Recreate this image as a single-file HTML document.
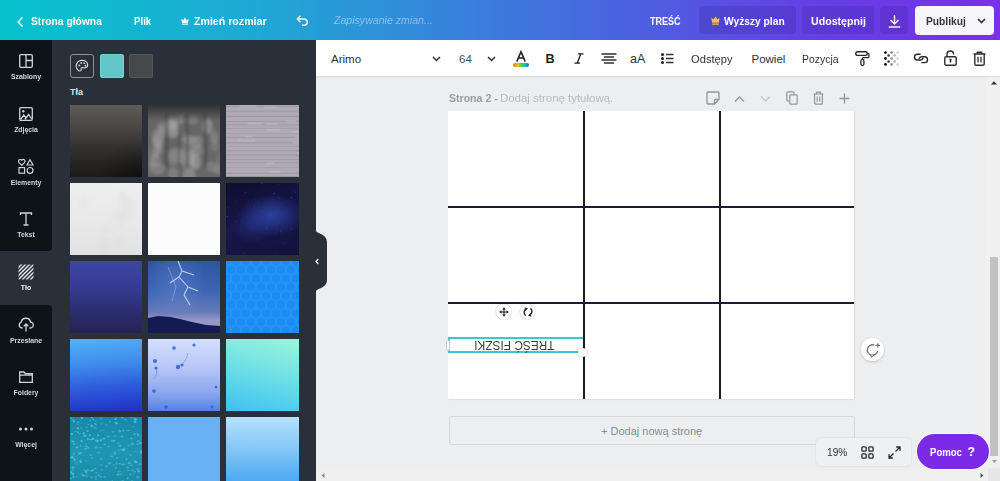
<!DOCTYPE html>
<html><head><meta charset="utf-8">
<style>
*{margin:0;padding:0;box-sizing:border-box}
html,body{width:1000px;height:481px;overflow:hidden;font-family:"Liberation Sans",sans-serif;background:#edeef0}
.abs{position:absolute}
svg{position:absolute;overflow:visible}
#top{position:absolute;left:0;top:0;width:1000px;height:40px;background:linear-gradient(90deg,#06c2cc 0%,#1eaad4 25%,#3389da 42%,#4a63e0 62%,#6342e6 80%,#7830e8 100%)}
.t{position:absolute;white-space:nowrap;transform-origin:0 0;line-height:1}
.tb{font-weight:bold;font-size:11px;color:#fff}
#side{position:absolute;left:0;top:40px;width:52px;height:441px;background:#293039}
.sblk{position:absolute;left:0;width:52px;background:#0e1318}
#panel{position:absolute;left:52px;top:40px;width:264px;height:441px;background:#293039}
#toolbar{position:absolute;left:316px;top:40px;width:684px;height:37px;background:#fff;border-bottom:1px solid #dcdddf;box-shadow:0 1px 2px rgba(0,0,0,0.05)}
.sl{font-size:8px;font-weight:bold;color:#d4d6d8}
.img{position:absolute;width:72.5px;height:72px}
.tt{font-size:11.5px;color:#2d3034}
#page{position:absolute;left:448px;top:111px;width:406px;height:288px;background:#fff;overflow:hidden;box-shadow:0.5px 0.5px 1.5px rgba(0,0,0,0.2)}
.hl{position:absolute;left:0;width:406px;height:1.8px;background:#1b1d2e}
.vl{position:absolute;top:0;width:1.9px;height:288px;background:#181a2a}
</style></head><body>
<div id="top">
  <svg style="left:16px;top:17px" width="8" height="10" viewBox="0 0 8 10"><path d="M6.5 0.6 L2.2 5 L6.5 9.4" fill="none" stroke="#e8fbfc" stroke-width="1.5"/></svg>
  <div class="t tb" style="left:31px;top:16px;transform:scaleX(0.935)">Strona główna</div>
  <div class="t tb" style="left:134px;top:16px;transform:scaleX(0.88)">Plik</div>
  <svg style="left:181px;top:17px" width="8" height="8" viewBox="0 0 8 8"><path d="M0.3 1.5 L2.2 3.2 L4 0.4 L5.8 3.2 L7.7 1.5 L7 6 L1 6 Z M1 6.6 H7 V7.8 H1 Z" fill="#f2f8fc"/></svg>
  <div class="t tb" style="left:194px;top:16px;transform:scaleX(0.965)">Zmień rozmiar</div>
  <svg style="left:296px;top:15px" width="14" height="11" viewBox="0 0 14 11"><path d="M4.5 0.8 L1.2 4 L4.5 7.2 M1.5 4 H8.5 A4 3.3 0 0 1 8.5 10.3 H6" fill="none" stroke="#f2f8fc" stroke-width="1.4"/></svg>
  <div class="t" style="left:334px;top:15px;font-size:11.5px;font-style:italic;color:rgba(190,220,250,0.65);transform:scaleX(0.92)">Zapisywanie zmian...</div>
  <div class="t tb" style="left:650px;top:17px;font-size:10px;transform:scaleX(0.9)">TREŚĆ</div>
  <div class="abs" style="left:699px;top:6px;width:97px;height:28px;border-radius:4px;background:rgba(50,30,140,0.22)"></div>
  <svg style="left:711px;top:16px" width="9" height="9" viewBox="0 0 8 8"><path d="M0.3 1.5 L2.2 3.2 L4 0.4 L5.8 3.2 L7.7 1.5 L7 6 L1 6 Z M1 6.6 H7 V7.8 H1 Z" fill="#f3c04a"/></svg>
  <div class="t tb" style="left:724px;top:16px;transform:scaleX(0.93)">Wyższy plan</div>
  <div class="abs" style="left:802px;top:6px;width:72px;height:28px;border-radius:4px;background:rgba(50,30,140,0.22)"></div>
  <div class="t tb" style="left:811px;top:16px;transform:scaleX(0.965)">Udostępnij</div>
  <div class="abs" style="left:880px;top:6px;width:28px;height:28px;border-radius:4px;background:rgba(50,30,140,0.22)"></div>
  <svg style="left:888px;top:14px" width="13" height="14" viewBox="0 0 13 14"><path d="M6.5 1 V10 M2.5 6 L6.5 10 L10.5 6 M0.8 13 H12.2" fill="none" stroke="#f3f0fc" stroke-width="1.4"/></svg>
  <div class="abs" style="left:915px;top:6px;width:79px;height:29px;border-radius:4px;background:#f6f6f9"></div>
  <div class="t tb" style="left:926px;top:16px;color:#31353a;transform:scaleX(0.93)">Publikuj</div>
  <svg style="left:977px;top:18px" width="9" height="6" viewBox="0 0 9 6"><path d="M1 1 L4.5 4.5 L8 1" fill="none" stroke="#31353a" stroke-width="1.6"/></svg>
</div>

<div id="side">
  <div class="sblk" style="top:0;height:211px;border-bottom-right-radius:4px"></div>
  <div class="sblk" style="top:264.5px;height:177px;border-top-right-radius:4px"></div>
  <!-- Szablony -->
  <svg style="left:19px;top:14px" width="14" height="14" viewBox="0 0 14 14"><rect x="0.7" y="0.7" width="12.6" height="12.6" rx="1.2" fill="none" stroke="#d0d2d5" stroke-width="1.3"/><path d="M7 0.7 V13.3 M7 6.5 H13.3" stroke="#d0d2d5" stroke-width="1.3"/></svg>
  <div class="t sl" style="left:0;width:52px;text-align:center;top:33px;transform-origin:26px 0;transform:scaleX(0.86)">Szablony</div>
  <!-- Zdjecia -->
  <svg style="left:19px;top:67px" width="14" height="14" viewBox="0 0 14 14"><rect x="0.7" y="0.7" width="12.6" height="12.6" rx="1.2" fill="none" stroke="#d0d2d5" stroke-width="1.3"/><circle cx="4.3" cy="4.2" r="1.2" fill="#d0d2d5"/><path d="M1.5 12.5 L4.8 8 L7.2 11 M6 12.5 L9.6 7.5 L12.6 12" fill="none" stroke="#d0d2d5" stroke-width="1.3"/></svg>
  <div class="t sl" style="left:0;width:52px;text-align:center;top:86px;transform-origin:26px 0;transform:scaleX(0.86)">Zdjęcia</div>
  <!-- Elementy -->
  <svg style="left:18px;top:119px" width="16" height="15" viewBox="0 0 16 15"><path d="M3.8 6.3 L0.9 3.4 A1.7 1.7 0 0 1 3.8 1.2 A1.7 1.7 0 0 1 6.7 3.4 Z" fill="none" stroke="#d0d2d5" stroke-width="1.2"/><path d="M12 0.8 L15 6 H9 Z" fill="none" stroke="#d0d2d5" stroke-width="1.2"/><rect x="1" y="8.6" width="5.6" height="5.6" fill="none" stroke="#d0d2d5" stroke-width="1.2"/><circle cx="12" cy="11.4" r="2.9" fill="none" stroke="#d0d2d5" stroke-width="1.2"/></svg>
  <div class="t sl" style="left:0;width:52px;text-align:center;top:139px;transform-origin:26px 0;transform:scaleX(0.86)">Elementy</div>
  <!-- Tekst -->
  <svg style="left:19px;top:172px" width="14" height="14" viewBox="0 0 14 14"><path d="M1.5 3 V1 H12.5 V3 M7 1 V13 M4.5 13 H9.5" fill="none" stroke="#d0d2d5" stroke-width="1.3"/></svg>
  <div class="t sl" style="left:0;width:52px;text-align:center;top:191px;transform-origin:26px 0;transform:scaleX(0.86)">Tekst</div>
  <!-- Tlo -->
  <svg style="left:18px;top:224px" width="16" height="16" viewBox="0 0 16 16"><defs><clipPath id="cp"><rect x="0.5" y="0.5" width="15" height="15"/></clipPath></defs><g clip-path="url(#cp)" stroke="#eeeeef" stroke-width="1.4"><path d="M-4 4 L4 -4 M-4 8 L8 -4 M-4 12 L12 -4 M-4 16 L16 -4 M0 16 L16 0 M4 16 L16 4 M8 16 L16 8 M12 16 L16 12"/></g></svg>
  <div class="t sl" style="left:0;width:52px;text-align:center;top:244px;transform-origin:26px 0;transform:scaleX(0.86);color:#f2f2f3">Tło</div>
  <!-- Przeslane -->
  <svg style="left:18px;top:277px" width="16" height="15" viewBox="0 0 16 15"><path d="M4.6 11 H4 A3 3 0 0 1 3.2 5.2 A4.8 4.8 0 0 1 12.6 5 A3 3 0 0 1 12 11 H11.4" fill="none" stroke="#d0d2d5" stroke-width="1.3"/><path d="M8 14.5 V7 M5.6 9.4 L8 7 L10.4 9.4" fill="none" stroke="#d0d2d5" stroke-width="1.3"/></svg>
  <div class="t sl" style="left:0;width:52px;text-align:center;top:297px;transform-origin:26px 0;transform:scaleX(0.86)">Przesłane</div>
  <!-- Foldery -->
  <svg style="left:19px;top:331px" width="14" height="12" viewBox="0 0 14 12"><path d="M0.7 1 H5 L6.3 2.6 H13.3 V11.3 H0.7 Z M0.7 4.2 H13.3" fill="none" stroke="#d0d2d5" stroke-width="1.3"/></svg>
  <div class="t sl" style="left:0;width:52px;text-align:center;top:349px;transform-origin:26px 0;transform:scaleX(0.86)">Foldery</div>
  <!-- Wiecej -->
  <svg style="left:18px;top:387px" width="16" height="4" viewBox="0 0 16 4"><circle cx="2.5" cy="2" r="1.5" fill="#d0d2d5"/><circle cx="8" cy="2" r="1.5" fill="#d0d2d5"/><circle cx="13.5" cy="2" r="1.5" fill="#d0d2d5"/></svg>
  <div class="t sl" style="left:0;width:52px;text-align:center;top:401px;transform-origin:26px 0;transform:scaleX(0.86)">Więcej</div>
</div>
<div id="panel">
  <div class="abs" style="left:18px;top:14px;width:24px;height:24px;border:1px solid #8c9096;border-radius:3px"></div>
  <svg style="left:23px;top:19px" width="14" height="14" viewBox="0 0 14 14"><path d="M7 1.2 A5.8 5.8 0 0 0 2.5 10.6 C3.6 12 5.4 12.4 6 11.5 C6.5 10.6 5.6 9.6 6.4 8.9 C7.3 8.1 9 9.3 10.6 8.8 C12.2 8.3 12.8 6.8 12.6 5.4 C12.2 3 10 1.2 7 1.2 Z" fill="none" stroke="#d8dadd" stroke-width="1.1"/><circle cx="4.4" cy="6.4" r="0.9" fill="#d8dadd"/><circle cx="6.2" cy="3.9" r="0.9" fill="#d8dadd"/><circle cx="9.2" cy="4.2" r="0.9" fill="#d8dadd"/><circle cx="10.4" cy="6.6" r="0.9" fill="#d8dadd"/></svg>
  <div class="abs" style="left:47.5px;top:14px;width:24px;height:24px;border-radius:3px;background:#62c6c6;box-shadow:0 0 0 1px #74d2d2 inset"></div>
  <div class="abs" style="left:77px;top:14px;width:24px;height:24px;border-radius:3px;background:#474849;box-shadow:0 0 0 1px #555657 inset"></div>
  <div class="t" style="left:18px;top:48px;font-size:9px;font-weight:bold;color:#dfe0e2">Tła</div>
  <div class="img" style="left:17.5px;top:64.5px;background:radial-gradient(ellipse 60% 50% at 100% 100%,rgba(0,0,0,0.45),transparent),linear-gradient(180deg,#5f5b59 0%,#4a4745 30%,#333130 60%,#1b1a19 100%);overflow:hidden"></div>
  <div class="img" style="left:95.7px;top:64.5px;background:#666;overflow:hidden"><svg style="left:0;top:0" width="73" height="73" viewBox="0 0 73 73"><defs><filter id="bl"><feGaussianBlur stdDeviation="1.5"/></filter><linearGradient id="tg" x1="0" y1="0" x2="0" y2="1"><stop offset="0" stop-color="#303030" stop-opacity="1"/><stop offset="1" stop-color="#303030" stop-opacity="0"/></linearGradient></defs><g filter="url(#bl)"><ellipse cx="23.6" cy="19.5" rx="6.3" ry="4.4" fill="rgb(154,154,154)" opacity="0.5"/><ellipse cx="6.9" cy="46.7" rx="7.5" ry="5.1" fill="rgb(125,125,125)" opacity="0.5"/><ellipse cx="31.7" cy="14.4" rx="3.5" ry="6.1" fill="rgb(172,172,172)" opacity="0.5"/><ellipse cx="41.3" cy="69.7" rx="6.2" ry="6.9" fill="rgb(123,123,123)" opacity="0.5"/><ellipse cx="42.1" cy="35.0" rx="7.9" ry="4.2" fill="rgb(174,174,174)" opacity="0.5"/><ellipse cx="9.7" cy="36.4" rx="5.7" ry="6.9" fill="rgb(155,155,155)" opacity="0.5"/><ellipse cx="59.6" cy="21.4" rx="5.9" ry="7.2" fill="rgb(143,143,143)" opacity="0.5"/><ellipse cx="7.1" cy="54.9" rx="5.8" ry="7.1" fill="rgb(151,151,151)" opacity="0.5"/><ellipse cx="49.7" cy="36.9" rx="4.6" ry="6.9" fill="rgb(149,149,149)" opacity="0.5"/><ellipse cx="26.4" cy="25.7" rx="3.9" ry="7.9" fill="rgb(125,125,125)" opacity="0.5"/><ellipse cx="41.9" cy="43.1" rx="7.4" ry="7.6" fill="rgb(138,138,138)" opacity="0.5"/><ellipse cx="44.5" cy="14.6" rx="5.6" ry="4.8" fill="rgb(141,141,141)" opacity="0.5"/><ellipse cx="11.1" cy="40.8" rx="3.2" ry="7.3" fill="rgb(168,168,168)" opacity="0.5"/><ellipse cx="40.7" cy="59.7" rx="7.1" ry="5.7" fill="rgb(142,142,142)" opacity="0.5"/><ellipse cx="43.4" cy="46.5" rx="5.3" ry="8.2" fill="rgb(137,137,137)" opacity="0.5"/><ellipse cx="34.6" cy="51.8" rx="3.3" ry="7.5" fill="rgb(161,161,161)" opacity="0.5"/><ellipse cx="42.2" cy="52.9" rx="5.2" ry="7.6" fill="rgb(162,162,162)" opacity="0.5"/><ellipse cx="25.3" cy="69.3" rx="4.8" ry="7.1" fill="rgb(151,151,151)" opacity="0.5"/><ellipse cx="4.3" cy="58.4" rx="3.6" ry="5.2" fill="rgb(145,145,145)" opacity="0.5"/><ellipse cx="66.9" cy="41.3" rx="3.8" ry="6.0" fill="rgb(137,137,137)" opacity="0.5"/><ellipse cx="64.5" cy="61.6" rx="7.3" ry="5.4" fill="rgb(146,146,146)" opacity="0.5"/><ellipse cx="72.0" cy="53.0" rx="4.9" ry="5.2" fill="rgb(125,125,125)" opacity="0.5"/><ellipse cx="12.9" cy="24.6" rx="4.2" ry="6.4" fill="rgb(157,157,157)" opacity="0.5"/><ellipse cx="13.3" cy="27.8" rx="3.7" ry="6.7" fill="rgb(159,159,159)" opacity="0.5"/><ellipse cx="41.3" cy="70.0" rx="6.5" ry="6.6" fill="rgb(159,159,159)" opacity="0.5"/><ellipse cx="47.8" cy="56.6" rx="5.3" ry="8.4" fill="rgb(175,175,175)" opacity="0.5"/><ellipse cx="49.7" cy="45.2" rx="5.0" ry="6.0" fill="rgb(150,150,150)" opacity="0.5"/><ellipse cx="46.3" cy="13.9" rx="3.3" ry="5.0" fill="rgb(130,130,130)" opacity="0.5"/><ellipse cx="8.0" cy="47.8" rx="3.5" ry="6.8" fill="rgb(154,154,154)" opacity="0.5"/><ellipse cx="7.4" cy="32.9" rx="3.1" ry="8.4" fill="rgb(159,159,159)" opacity="0.5"/><ellipse cx="27.5" cy="50.0" rx="7.8" ry="7.0" fill="rgb(150,150,150)" opacity="0.5"/><ellipse cx="9.0" cy="63.5" rx="8.0" ry="6.3" fill="rgb(150,150,150)" opacity="0.5"/><ellipse cx="22.8" cy="19.1" rx="6.7" ry="7.7" fill="rgb(150,150,150)" opacity="0.5"/><ellipse cx="60.5" cy="20.2" rx="3.1" ry="8.8" fill="rgb(153,153,153)" opacity="0.5"/><ellipse cx="26.4" cy="53.5" rx="7.6" ry="7.8" fill="rgb(139,139,139)" opacity="0.5"/><ellipse cx="71.4" cy="64.4" rx="6.5" ry="5.3" fill="rgb(143,143,143)" opacity="0.5"/><ellipse cx="66.3" cy="32.4" rx="4.1" ry="6.7" fill="rgb(152,152,152)" opacity="0.5"/><ellipse cx="24.1" cy="24.1" rx="7.1" ry="8.9" fill="rgb(174,174,174)" opacity="0.5"/><ellipse cx="14.2" cy="25.1" rx="5.0" ry="8.0" fill="rgb(132,132,132)" opacity="0.5"/><ellipse cx="37.8" cy="32.4" rx="3.1" ry="4.1" fill="rgb(137,137,137)" opacity="0.5"/><rect x="17" y="8" width="4" height="55" fill="#3a3a3a" opacity="0.45"/><rect x="38" y="8" width="3" height="55" fill="#3a3a3a" opacity="0.45"/><rect x="56" y="8" width="3" height="55" fill="#3a3a3a" opacity="0.45"/><rect x="30" y="8" width="2" height="55" fill="#3a3a3a" opacity="0.45"/></g><rect width="73" height="16" fill="url(#tg)"/></svg></div>
  <div class="img" style="left:174px;top:64.5px;background:#b0aab3;overflow:hidden"><svg style="left:0;top:0" width="73" height="73" viewBox="0 0 73 73"><rect x="0" y="1.0" width="73" height="1.0" fill="rgb(141,135,147)" opacity="0.5"/><rect x="0" y="5.7" width="73" height="1.4" fill="rgb(149,143,155)" opacity="0.5"/><rect x="0" y="10.8" width="73" height="1.2" fill="rgb(146,140,152)" opacity="0.5"/><rect x="0" y="16.1" width="73" height="0.9" fill="rgb(142,136,148)" opacity="0.5"/><rect x="0" y="19.4" width="73" height="1.0" fill="rgb(145,139,151)" opacity="0.5"/><rect x="0" y="22.9" width="73" height="1.1" fill="rgb(154,148,160)" opacity="0.5"/><rect x="0" y="28.0" width="73" height="1.0" fill="rgb(155,149,161)" opacity="0.5"/><rect x="0" y="31.9" width="73" height="1.1" fill="rgb(138,132,144)" opacity="0.5"/><rect x="0" y="37.1" width="73" height="1.2" fill="rgb(141,135,147)" opacity="0.5"/><rect x="0" y="41.3" width="73" height="0.7" fill="rgb(155,149,161)" opacity="0.5"/><rect x="0" y="45.2" width="73" height="1.2" fill="rgb(147,141,153)" opacity="0.5"/><rect x="0" y="49.3" width="73" height="1.2" fill="rgb(137,131,143)" opacity="0.5"/><rect x="0" y="54.1" width="73" height="0.7" fill="rgb(139,133,145)" opacity="0.5"/><rect x="0" y="57.2" width="73" height="1.1" fill="rgb(149,143,155)" opacity="0.5"/><rect x="0" y="62.2" width="73" height="0.7" fill="rgb(154,148,160)" opacity="0.5"/><rect x="0" y="67.7" width="73" height="1.1" fill="rgb(146,140,152)" opacity="0.5"/><rect x="0" y="71.1" width="73" height="1.0" fill="rgb(135,129,141)" opacity="0.5"/><rect x="70.9" y="47.4" width="13.4" height="2" fill="#cfcad2" opacity="0.35"/><rect x="68.2" y="31.7" width="18.2" height="2" fill="#cfcad2" opacity="0.35"/><rect x="60.3" y="15.4" width="9.5" height="2" fill="#cfcad2" opacity="0.35"/><rect x="21.4" y="17.6" width="14.2" height="2" fill="#cfcad2" opacity="0.35"/><rect x="18.9" y="30.6" width="7.8" height="2" fill="#cfcad2" opacity="0.35"/><rect x="66.4" y="25.8" width="12.4" height="2" fill="#cfcad2" opacity="0.35"/><rect x="42.6" y="66.0" width="11.9" height="2" fill="#cfcad2" opacity="0.35"/><rect x="67.0" y="36.6" width="13.4" height="2" fill="#cfcad2" opacity="0.35"/><rect x="38.2" y="1.4" width="12.2" height="2" fill="#cfcad2" opacity="0.35"/><rect x="13.4" y="0.3" width="17.2" height="2" fill="#cfcad2" opacity="0.35"/><rect x="12.6" y="34.6" width="16.2" height="2" fill="#cfcad2" opacity="0.35"/><rect x="40.6" y="23.8" width="13.3" height="2" fill="#cfcad2" opacity="0.35"/><rect x="40.5" y="57.3" width="7.5" height="2" fill="#cfcad2" opacity="0.35"/><rect x="40.9" y="18.1" width="9.9" height="2" fill="#cfcad2" opacity="0.35"/></svg></div>
  <div class="img" style="left:17.5px;top:142.5px;background:linear-gradient(180deg,#eeeeee,#e8e8e8 60%,#e2e2e2);overflow:hidden"><svg style="left:0;top:0" width="73" height="73" viewBox="0 0 73 73"><defs><filter id="bl2"><feGaussianBlur stdDeviation="2.5"/></filter></defs><g filter="url(#bl2)"><ellipse cx="48.6" cy="35.5" rx="7.4" ry="6.8" fill="#dadada" opacity="0.3"/><ellipse cx="55.6" cy="31.6" rx="7.7" ry="5.5" fill="#dadada" opacity="0.3"/><ellipse cx="35.6" cy="46.6" rx="6.7" ry="5.7" fill="#dadada" opacity="0.3"/><ellipse cx="33.9" cy="61.5" rx="8.2" ry="7.4" fill="#dadada" opacity="0.3"/><ellipse cx="57.1" cy="20.6" rx="7.4" ry="7.7" fill="#dadada" opacity="0.3"/><ellipse cx="52.0" cy="13.2" rx="4.7" ry="5.2" fill="#dadada" opacity="0.3"/><ellipse cx="13.6" cy="19.4" rx="4.4" ry="6.3" fill="#dadada" opacity="0.3"/><ellipse cx="49.2" cy="58.8" rx="4.9" ry="6.6" fill="#dadada" opacity="0.3"/></g></svg></div>
  <div class="img" style="left:95.7px;top:142.5px;background:#fcfcfc;overflow:hidden"></div>
  <div class="img" style="left:174px;top:142.5px;background:radial-gradient(ellipse 45% 30% at 62% 45%,rgba(50,80,190,0.75),transparent),radial-gradient(ellipse 30% 25% at 35% 60%,rgba(40,60,160,0.4),transparent),linear-gradient(160deg,#0e0e30,#161648 50%,#12123c);overflow:hidden"><svg style="left:0;top:0" width="73" height="73" viewBox="0 0 73 73"><circle cx="48.2" cy="10.4" r="0.7" fill="#6a80d0" opacity="0.44"/><circle cx="16.0" cy="69.5" r="0.5" fill="#6a80d0" opacity="0.30"/><circle cx="72.3" cy="60.8" r="0.4" fill="#6a80d0" opacity="0.28"/><circle cx="37.6" cy="24.8" r="0.4" fill="#6a80d0" opacity="0.25"/><circle cx="52.7" cy="1.4" r="0.5" fill="#6a80d0" opacity="0.28"/><circle cx="1.3" cy="24.2" r="0.5" fill="#6a80d0" opacity="0.30"/><circle cx="4.7" cy="71.9" r="0.6" fill="#6a80d0" opacity="0.44"/><circle cx="7.6" cy="19.4" r="0.3" fill="#6a80d0" opacity="0.38"/><circle cx="19.7" cy="9.5" r="0.5" fill="#6a80d0" opacity="0.42"/><circle cx="59.8" cy="18.9" r="0.4" fill="#6a80d0" opacity="0.43"/><circle cx="41.7" cy="51.1" r="0.3" fill="#6a80d0" opacity="0.17"/><circle cx="50.2" cy="31.0" r="0.3" fill="#6a80d0" opacity="0.43"/><circle cx="46.3" cy="58.5" r="0.3" fill="#6a80d0" opacity="0.41"/><circle cx="4.9" cy="63.0" r="0.5" fill="#6a80d0" opacity="0.25"/><circle cx="40.4" cy="67.6" r="0.4" fill="#6a80d0" opacity="0.19"/><circle cx="38.5" cy="17.4" r="0.3" fill="#6a80d0" opacity="0.20"/><circle cx="3.7" cy="14.7" r="0.4" fill="#6a80d0" opacity="0.24"/><circle cx="55.4" cy="21.2" r="0.5" fill="#6a80d0" opacity="0.20"/><circle cx="25.3" cy="1.3" r="0.4" fill="#6a80d0" opacity="0.15"/><circle cx="53.5" cy="40.2" r="0.4" fill="#6a80d0" opacity="0.29"/><circle cx="68.2" cy="7.8" r="0.6" fill="#6a80d0" opacity="0.28"/><circle cx="36.1" cy="60.9" r="0.5" fill="#6a80d0" opacity="0.30"/><circle cx="50.2" cy="71.7" r="0.4" fill="#6a80d0" opacity="0.40"/><circle cx="51.6" cy="46.4" r="0.5" fill="#6a80d0" opacity="0.25"/><circle cx="4.0" cy="9.5" r="0.3" fill="#6a80d0" opacity="0.37"/><circle cx="18.7" cy="11.9" r="0.3" fill="#6a80d0" opacity="0.40"/><circle cx="63.5" cy="48.9" r="0.4" fill="#6a80d0" opacity="0.22"/><circle cx="21.4" cy="33.5" r="0.4" fill="#6a80d0" opacity="0.28"/><circle cx="19.2" cy="70.2" r="0.7" fill="#6a80d0" opacity="0.31"/><circle cx="17.8" cy="70.5" r="0.4" fill="#6a80d0" opacity="0.26"/><circle cx="0.1" cy="27.9" r="0.5" fill="#6a80d0" opacity="0.30"/><circle cx="14.7" cy="36.8" r="0.3" fill="#6a80d0" opacity="0.23"/><circle cx="6.6" cy="29.2" r="0.3" fill="#6a80d0" opacity="0.16"/><circle cx="22.2" cy="17.0" r="0.5" fill="#6a80d0" opacity="0.31"/><circle cx="54.8" cy="48.0" r="0.6" fill="#6a80d0" opacity="0.41"/><circle cx="28.4" cy="23.8" r="0.7" fill="#6a80d0" opacity="0.19"/><circle cx="52.9" cy="47.0" r="0.3" fill="#6a80d0" opacity="0.40"/><circle cx="65.1" cy="45.8" r="0.6" fill="#6a80d0" opacity="0.39"/><circle cx="10.2" cy="38.2" r="0.5" fill="#6a80d0" opacity="0.40"/><circle cx="58.7" cy="60.3" r="0.5" fill="#6a80d0" opacity="0.42"/><circle cx="49.9" cy="50.6" r="0.4" fill="#6a80d0" opacity="0.16"/><circle cx="9.7" cy="26.3" r="0.3" fill="#6a80d0" opacity="0.40"/><circle cx="40.8" cy="45.8" r="0.6" fill="#6a80d0" opacity="0.35"/><circle cx="35.7" cy="0.2" r="0.6" fill="#6a80d0" opacity="0.37"/><circle cx="36.7" cy="39.1" r="0.6" fill="#6a80d0" opacity="0.17"/><circle cx="53.8" cy="18.4" r="0.3" fill="#6a80d0" opacity="0.23"/><circle cx="53.2" cy="15.0" r="0.6" fill="#6a80d0" opacity="0.44"/><circle cx="36.1" cy="27.9" r="0.5" fill="#6a80d0" opacity="0.36"/><circle cx="56.0" cy="45.0" r="0.6" fill="#6a80d0" opacity="0.17"/><circle cx="10.8" cy="18.5" r="0.6" fill="#6a80d0" opacity="0.24"/><circle cx="41.4" cy="0.9" r="0.3" fill="#6a80d0" opacity="0.23"/><circle cx="49.1" cy="50.5" r="0.6" fill="#6a80d0" opacity="0.24"/><circle cx="37.7" cy="33.9" r="0.5" fill="#6a80d0" opacity="0.19"/><circle cx="65.2" cy="14.5" r="0.7" fill="#6a80d0" opacity="0.43"/><circle cx="1.3" cy="33.5" r="0.6" fill="#6a80d0" opacity="0.44"/><circle cx="32.8" cy="19.6" r="0.4" fill="#6a80d0" opacity="0.43"/><circle cx="15.4" cy="42.4" r="0.4" fill="#6a80d0" opacity="0.31"/><circle cx="69.6" cy="9.7" r="0.6" fill="#6a80d0" opacity="0.30"/><circle cx="64.7" cy="51.3" r="0.4" fill="#6a80d0" opacity="0.42"/><circle cx="35.5" cy="1.8" r="0.3" fill="#6a80d0" opacity="0.30"/></svg></div>
  <div class="img" style="left:17.5px;top:220.5px;background:linear-gradient(180deg,#3e45a6 0%,#363c92 35%,#2c2e70 70%,#232352 100%);overflow:hidden"></div>
  <div class="img" style="left:95.7px;top:220.5px;background:radial-gradient(ellipse 40% 50% at 40% 30%,rgba(120,150,220,0.35),transparent),linear-gradient(180deg,#2f56a4 0%,#3a64b2 40%,#6a7cbc 72%,#9498c4 82%);overflow:hidden"><svg style="left:0;top:0" width="73" height="73" viewBox="0 0 73 73"><path d="M0 57 L10 55 L22 56 L32 58 L44 61 L58 64 L73 65 V73 H0 Z" fill="#141a52"/><defs><filter id="bl3"><feGaussianBlur stdDeviation="0.7"/></filter></defs><g filter="url(#bl3)"><path d="M30 0 L34 10 L31 16 L40 26 L36 34 L42 44 M34 10 L46 14 M40 26 L50 30 M31 16 L22 22" fill="none" stroke="#dce6ff" stroke-width="1.1" opacity="0.8"/><path d="M20 6 L28 26 L24 40" fill="none" stroke="#b8c8f4" stroke-width="0.8" opacity="0.5"/></g></svg></div>
  <div class="img" style="left:174px;top:220.5px;background:#1b8cf3;overflow:hidden"><svg style="left:0;top:0" width="73" height="73" viewBox="0 0 73 73"><g fill="none" stroke="#4aa4ff" stroke-width="0.7" opacity="0.45"><polygon points="-0.5,-6.1 -5.0,-3.5 -9.5,-6.1 -9.5,-11.3 -5.0,-13.9 -0.5,-11.3"/><polygon points="9.5,-6.1 5.0,-3.5 0.5,-6.1 0.5,-11.3 5.0,-13.9 9.5,-11.3"/><polygon points="19.5,-6.1 15.0,-3.5 10.5,-6.1 10.5,-11.3 15.0,-13.9 19.5,-11.3"/><polygon points="29.5,-6.1 25.0,-3.5 20.5,-6.1 20.5,-11.3 25.0,-13.9 29.5,-11.3"/><polygon points="39.5,-6.1 35.0,-3.5 30.5,-6.1 30.5,-11.3 35.0,-13.9 39.5,-11.3"/><polygon points="49.5,-6.1 45.0,-3.5 40.5,-6.1 40.5,-11.3 45.0,-13.9 49.5,-11.3"/><polygon points="59.5,-6.1 55.0,-3.5 50.5,-6.1 50.5,-11.3 55.0,-13.9 59.5,-11.3"/><polygon points="69.5,-6.1 65.0,-3.5 60.5,-6.1 60.5,-11.3 65.0,-13.9 69.5,-11.3"/><polygon points="79.5,-6.1 75.0,-3.5 70.5,-6.1 70.5,-11.3 75.0,-13.9 79.5,-11.3"/><polygon points="-5.5,2.6 -10.0,5.2 -14.5,2.6 -14.5,-2.6 -10.0,-5.2 -5.5,-2.6"/><polygon points="4.5,2.6 0.0,5.2 -4.5,2.6 -4.5,-2.6 -0.0,-5.2 4.5,-2.6"/><polygon points="14.5,2.6 10.0,5.2 5.5,2.6 5.5,-2.6 10.0,-5.2 14.5,-2.6"/><polygon points="24.5,2.6 20.0,5.2 15.5,2.6 15.5,-2.6 20.0,-5.2 24.5,-2.6"/><polygon points="34.5,2.6 30.0,5.2 25.5,2.6 25.5,-2.6 30.0,-5.2 34.5,-2.6"/><polygon points="44.5,2.6 40.0,5.2 35.5,2.6 35.5,-2.6 40.0,-5.2 44.5,-2.6"/><polygon points="54.5,2.6 50.0,5.2 45.5,2.6 45.5,-2.6 50.0,-5.2 54.5,-2.6"/><polygon points="64.5,2.6 60.0,5.2 55.5,2.6 55.5,-2.6 60.0,-5.2 64.5,-2.6"/><polygon points="74.5,2.6 70.0,5.2 65.5,2.6 65.5,-2.6 70.0,-5.2 74.5,-2.6"/><polygon points="-0.5,11.3 -5.0,13.9 -9.5,11.3 -9.5,6.1 -5.0,3.5 -0.5,6.1"/><polygon points="9.5,11.3 5.0,13.9 0.5,11.3 0.5,6.1 5.0,3.5 9.5,6.1"/><polygon points="19.5,11.3 15.0,13.9 10.5,11.3 10.5,6.1 15.0,3.5 19.5,6.1"/><polygon points="29.5,11.3 25.0,13.9 20.5,11.3 20.5,6.1 25.0,3.5 29.5,6.1"/><polygon points="39.5,11.3 35.0,13.9 30.5,11.3 30.5,6.1 35.0,3.5 39.5,6.1"/><polygon points="49.5,11.3 45.0,13.9 40.5,11.3 40.5,6.1 45.0,3.5 49.5,6.1"/><polygon points="59.5,11.3 55.0,13.9 50.5,11.3 50.5,6.1 55.0,3.5 59.5,6.1"/><polygon points="69.5,11.3 65.0,13.9 60.5,11.3 60.5,6.1 65.0,3.5 69.5,6.1"/><polygon points="79.5,11.3 75.0,13.9 70.5,11.3 70.5,6.1 75.0,3.5 79.5,6.1"/><polygon points="-5.5,20.0 -10.0,22.6 -14.5,20.0 -14.5,14.8 -10.0,12.2 -5.5,14.8"/><polygon points="4.5,20.0 0.0,22.6 -4.5,20.0 -4.5,14.8 -0.0,12.2 4.5,14.8"/><polygon points="14.5,20.0 10.0,22.6 5.5,20.0 5.5,14.8 10.0,12.2 14.5,14.8"/><polygon points="24.5,20.0 20.0,22.6 15.5,20.0 15.5,14.8 20.0,12.2 24.5,14.8"/><polygon points="34.5,20.0 30.0,22.6 25.5,20.0 25.5,14.8 30.0,12.2 34.5,14.8"/><polygon points="44.5,20.0 40.0,22.6 35.5,20.0 35.5,14.8 40.0,12.2 44.5,14.8"/><polygon points="54.5,20.0 50.0,22.6 45.5,20.0 45.5,14.8 50.0,12.2 54.5,14.8"/><polygon points="64.5,20.0 60.0,22.6 55.5,20.0 55.5,14.8 60.0,12.2 64.5,14.8"/><polygon points="74.5,20.0 70.0,22.6 65.5,20.0 65.5,14.8 70.0,12.2 74.5,14.8"/><polygon points="-0.5,28.7 -5.0,31.3 -9.5,28.7 -9.5,23.5 -5.0,20.9 -0.5,23.5"/><polygon points="9.5,28.7 5.0,31.3 0.5,28.7 0.5,23.5 5.0,20.9 9.5,23.5"/><polygon points="19.5,28.7 15.0,31.3 10.5,28.7 10.5,23.5 15.0,20.9 19.5,23.5"/><polygon points="29.5,28.7 25.0,31.3 20.5,28.7 20.5,23.5 25.0,20.9 29.5,23.5"/><polygon points="39.5,28.7 35.0,31.3 30.5,28.7 30.5,23.5 35.0,20.9 39.5,23.5"/><polygon points="49.5,28.7 45.0,31.3 40.5,28.7 40.5,23.5 45.0,20.9 49.5,23.5"/><polygon points="59.5,28.7 55.0,31.3 50.5,28.7 50.5,23.5 55.0,20.9 59.5,23.5"/><polygon points="69.5,28.7 65.0,31.3 60.5,28.7 60.5,23.5 65.0,20.9 69.5,23.5"/><polygon points="79.5,28.7 75.0,31.3 70.5,28.7 70.5,23.5 75.0,20.9 79.5,23.5"/><polygon points="-5.5,37.4 -10.0,40.0 -14.5,37.4 -14.5,32.2 -10.0,29.6 -5.5,32.2"/><polygon points="4.5,37.4 0.0,40.0 -4.5,37.4 -4.5,32.2 -0.0,29.6 4.5,32.2"/><polygon points="14.5,37.4 10.0,40.0 5.5,37.4 5.5,32.2 10.0,29.6 14.5,32.2"/><polygon points="24.5,37.4 20.0,40.0 15.5,37.4 15.5,32.2 20.0,29.6 24.5,32.2"/><polygon points="34.5,37.4 30.0,40.0 25.5,37.4 25.5,32.2 30.0,29.6 34.5,32.2"/><polygon points="44.5,37.4 40.0,40.0 35.5,37.4 35.5,32.2 40.0,29.6 44.5,32.2"/><polygon points="54.5,37.4 50.0,40.0 45.5,37.4 45.5,32.2 50.0,29.6 54.5,32.2"/><polygon points="64.5,37.4 60.0,40.0 55.5,37.4 55.5,32.2 60.0,29.6 64.5,32.2"/><polygon points="74.5,37.4 70.0,40.0 65.5,37.4 65.5,32.2 70.0,29.6 74.5,32.2"/><polygon points="-0.5,46.1 -5.0,48.7 -9.5,46.1 -9.5,40.9 -5.0,38.3 -0.5,40.9"/><polygon points="9.5,46.1 5.0,48.7 0.5,46.1 0.5,40.9 5.0,38.3 9.5,40.9"/><polygon points="19.5,46.1 15.0,48.7 10.5,46.1 10.5,40.9 15.0,38.3 19.5,40.9"/><polygon points="29.5,46.1 25.0,48.7 20.5,46.1 20.5,40.9 25.0,38.3 29.5,40.9"/><polygon points="39.5,46.1 35.0,48.7 30.5,46.1 30.5,40.9 35.0,38.3 39.5,40.9"/><polygon points="49.5,46.1 45.0,48.7 40.5,46.1 40.5,40.9 45.0,38.3 49.5,40.9"/><polygon points="59.5,46.1 55.0,48.7 50.5,46.1 50.5,40.9 55.0,38.3 59.5,40.9"/><polygon points="69.5,46.1 65.0,48.7 60.5,46.1 60.5,40.9 65.0,38.3 69.5,40.9"/><polygon points="79.5,46.1 75.0,48.7 70.5,46.1 70.5,40.9 75.0,38.3 79.5,40.9"/><polygon points="-5.5,54.8 -10.0,57.4 -14.5,54.8 -14.5,49.6 -10.0,47.0 -5.5,49.6"/><polygon points="4.5,54.8 0.0,57.4 -4.5,54.8 -4.5,49.6 -0.0,47.0 4.5,49.6"/><polygon points="14.5,54.8 10.0,57.4 5.5,54.8 5.5,49.6 10.0,47.0 14.5,49.6"/><polygon points="24.5,54.8 20.0,57.4 15.5,54.8 15.5,49.6 20.0,47.0 24.5,49.6"/><polygon points="34.5,54.8 30.0,57.4 25.5,54.8 25.5,49.6 30.0,47.0 34.5,49.6"/><polygon points="44.5,54.8 40.0,57.4 35.5,54.8 35.5,49.6 40.0,47.0 44.5,49.6"/><polygon points="54.5,54.8 50.0,57.4 45.5,54.8 45.5,49.6 50.0,47.0 54.5,49.6"/><polygon points="64.5,54.8 60.0,57.4 55.5,54.8 55.5,49.6 60.0,47.0 64.5,49.6"/><polygon points="74.5,54.8 70.0,57.4 65.5,54.8 65.5,49.6 70.0,47.0 74.5,49.6"/><polygon points="-0.5,63.5 -5.0,66.1 -9.5,63.5 -9.5,58.3 -5.0,55.7 -0.5,58.3"/><polygon points="9.5,63.5 5.0,66.1 0.5,63.5 0.5,58.3 5.0,55.7 9.5,58.3"/><polygon points="19.5,63.5 15.0,66.1 10.5,63.5 10.5,58.3 15.0,55.7 19.5,58.3"/><polygon points="29.5,63.5 25.0,66.1 20.5,63.5 20.5,58.3 25.0,55.7 29.5,58.3"/><polygon points="39.5,63.5 35.0,66.1 30.5,63.5 30.5,58.3 35.0,55.7 39.5,58.3"/><polygon points="49.5,63.5 45.0,66.1 40.5,63.5 40.5,58.3 45.0,55.7 49.5,58.3"/><polygon points="59.5,63.5 55.0,66.1 50.5,63.5 50.5,58.3 55.0,55.7 59.5,58.3"/><polygon points="69.5,63.5 65.0,66.1 60.5,63.5 60.5,58.3 65.0,55.7 69.5,58.3"/><polygon points="79.5,63.5 75.0,66.1 70.5,63.5 70.5,58.3 75.0,55.7 79.5,58.3"/><polygon points="-5.5,72.2 -10.0,74.8 -14.5,72.2 -14.5,67.0 -10.0,64.4 -5.5,67.0"/><polygon points="4.5,72.2 0.0,74.8 -4.5,72.2 -4.5,67.0 -0.0,64.4 4.5,67.0"/><polygon points="14.5,72.2 10.0,74.8 5.5,72.2 5.5,67.0 10.0,64.4 14.5,67.0"/><polygon points="24.5,72.2 20.0,74.8 15.5,72.2 15.5,67.0 20.0,64.4 24.5,67.0"/><polygon points="34.5,72.2 30.0,74.8 25.5,72.2 25.5,67.0 30.0,64.4 34.5,67.0"/><polygon points="44.5,72.2 40.0,74.8 35.5,72.2 35.5,67.0 40.0,64.4 44.5,67.0"/><polygon points="54.5,72.2 50.0,74.8 45.5,72.2 45.5,67.0 50.0,64.4 54.5,67.0"/><polygon points="64.5,72.2 60.0,74.8 55.5,72.2 55.5,67.0 60.0,64.4 64.5,67.0"/><polygon points="74.5,72.2 70.0,74.8 65.5,72.2 65.5,67.0 70.0,64.4 74.5,67.0"/></g></svg></div>
  <div class="img" style="left:17.5px;top:298.5px;background:linear-gradient(175deg,#52b2f6 0%,#3f8cec 35%,#2e5cdc 65%,#2030c4 100%);overflow:hidden"></div>
  <div class="img" style="left:95.7px;top:298.5px;background:linear-gradient(180deg,#d4defc 0%,#b6c6f6 40%,#8aa6ee 75%,#5482e2 100%);overflow:hidden"><svg style="left:0;top:0" width="73" height="73" viewBox="0 0 73 73"><defs><filter id="bl4"><feGaussianBlur stdDeviation="0.6"/></filter></defs><g filter="url(#bl4)"><circle cx="26" cy="9" r="1.8" fill="#2458d4" opacity="0.8"/><circle cx="46" cy="6" r="1.6" fill="#2458d4" opacity="0.8"/><circle cx="7" cy="22" r="2" fill="#2458d4" opacity="0.8"/><circle cx="8" cy="29" r="1.6" fill="#2458d4" opacity="0.8"/><circle cx="30" cy="28" r="2.2" fill="#2458d4" opacity="0.8"/><circle cx="34" cy="26" r="1.5" fill="#2458d4" opacity="0.8"/><circle cx="6" cy="52" r="1.8" fill="#2458d4" opacity="0.8"/><circle cx="18" cy="68" r="1.8" fill="#2458d4" opacity="0.8"/><circle cx="64" cy="68" r="1.4" fill="#2458d4" opacity="0.8"/><circle cx="68" cy="48" r="1.2" fill="#2458d4" opacity="0.8"/><path d="M30 28 Q38 24 40 14 M8 29 Q10 36 6 40" fill="none" stroke="#3060d8" stroke-width="0.5" opacity="0.7"/></g></svg></div>
  <div class="img" style="left:174px;top:298.5px;background:linear-gradient(195deg,#9af4dc 0%,#7ae6e2 35%,#58d2ec 70%,#40c0f2 100%);overflow:hidden"></div>
  <div class="img" style="left:17.5px;top:376.5px;background:linear-gradient(180deg,#1888a8,#1e96b4 50%,#1888a6);overflow:hidden"><svg style="left:0;top:0" width="73" height="73" viewBox="0 0 73 73"><ellipse cx="32.9" cy="22.0" rx="0.9" ry="0.8" fill="#6ad4e6" opacity="0.41"/><ellipse cx="61.3" cy="0.1" rx="1.6" ry="1.1" fill="#6ad4e6" opacity="0.34"/><ellipse cx="67.6" cy="52.1" rx="1.7" ry="0.8" fill="#6ad4e6" opacity="0.43"/><ellipse cx="28.7" cy="72.9" rx="1.4" ry="0.8" fill="#6ad4e6" opacity="0.45"/><ellipse cx="20.1" cy="3.5" rx="0.9" ry="1.1" fill="#6ad4e6" opacity="0.40"/><ellipse cx="68.3" cy="18.2" rx="1.1" ry="0.9" fill="#6ad4e6" opacity="0.37"/><ellipse cx="27.3" cy="69.8" rx="1.7" ry="1.1" fill="#6ad4e6" opacity="0.52"/><ellipse cx="66.7" cy="68.7" rx="1.3" ry="1.0" fill="#6ad4e6" opacity="0.32"/><ellipse cx="53.5" cy="32.9" rx="1.6" ry="1.0" fill="#6ad4e6" opacity="0.40"/><ellipse cx="3.6" cy="67.7" rx="0.9" ry="0.9" fill="#6ad4e6" opacity="0.42"/><ellipse cx="21.7" cy="53.9" rx="1.8" ry="0.8" fill="#6ad4e6" opacity="0.53"/><ellipse cx="22.0" cy="40.7" rx="1.2" ry="0.7" fill="#6ad4e6" opacity="0.36"/><ellipse cx="15.2" cy="66.1" rx="1.3" ry="0.7" fill="#6ad4e6" opacity="0.62"/><ellipse cx="72.7" cy="32.8" rx="0.9" ry="0.7" fill="#6ad4e6" opacity="0.33"/><ellipse cx="25.0" cy="6.6" rx="1.0" ry="0.8" fill="#6ad4e6" opacity="0.50"/><ellipse cx="64.8" cy="54.7" rx="1.2" ry="0.8" fill="#6ad4e6" opacity="0.48"/><ellipse cx="27.5" cy="24.7" rx="0.9" ry="0.8" fill="#6ad4e6" opacity="0.64"/><ellipse cx="9.2" cy="36.7" rx="1.4" ry="1.1" fill="#6ad4e6" opacity="0.38"/><ellipse cx="19.8" cy="18.1" rx="1.2" ry="0.9" fill="#6ad4e6" opacity="0.63"/><ellipse cx="62.0" cy="63.7" rx="0.8" ry="0.6" fill="#6ad4e6" opacity="0.55"/><ellipse cx="65.4" cy="34.5" rx="1.4" ry="0.6" fill="#6ad4e6" opacity="0.44"/><ellipse cx="67.7" cy="60.3" rx="1.7" ry="1.2" fill="#6ad4e6" opacity="0.39"/><ellipse cx="8.0" cy="11.3" rx="1.3" ry="1.0" fill="#6ad4e6" opacity="0.63"/><ellipse cx="52.7" cy="47.3" rx="1.6" ry="0.9" fill="#6ad4e6" opacity="0.49"/><ellipse cx="2.9" cy="57.1" rx="1.0" ry="1.2" fill="#6ad4e6" opacity="0.53"/><ellipse cx="22.2" cy="9.3" rx="1.1" ry="1.0" fill="#6ad4e6" opacity="0.54"/><ellipse cx="8.2" cy="5.1" rx="1.3" ry="0.9" fill="#6ad4e6" opacity="0.44"/><ellipse cx="16.3" cy="43.9" rx="0.8" ry="0.8" fill="#6ad4e6" opacity="0.46"/><ellipse cx="70.0" cy="47.1" rx="1.7" ry="0.9" fill="#6ad4e6" opacity="0.38"/><ellipse cx="18.0" cy="70.1" rx="1.5" ry="0.8" fill="#6ad4e6" opacity="0.31"/><ellipse cx="36.4" cy="49.2" rx="1.2" ry="0.8" fill="#6ad4e6" opacity="0.53"/><ellipse cx="67.5" cy="16.6" rx="0.8" ry="0.8" fill="#6ad4e6" opacity="0.45"/><ellipse cx="49.8" cy="14.5" rx="1.6" ry="1.0" fill="#6ad4e6" opacity="0.48"/><ellipse cx="15.0" cy="70.8" rx="1.1" ry="1.1" fill="#6ad4e6" opacity="0.38"/><ellipse cx="16.2" cy="55.5" rx="1.1" ry="1.2" fill="#6ad4e6" opacity="0.47"/><ellipse cx="13.7" cy="16.3" rx="1.2" ry="1.0" fill="#6ad4e6" opacity="0.63"/><ellipse cx="10.7" cy="28.7" rx="1.0" ry="1.2" fill="#6ad4e6" opacity="0.35"/><ellipse cx="3.8" cy="4.4" rx="1.2" ry="1.1" fill="#6ad4e6" opacity="0.61"/><ellipse cx="53.5" cy="72.8" rx="1.7" ry="0.8" fill="#6ad4e6" opacity="0.36"/><ellipse cx="68.3" cy="54.5" rx="0.8" ry="1.0" fill="#6ad4e6" opacity="0.43"/><ellipse cx="27.3" cy="24.2" rx="1.0" ry="0.6" fill="#6ad4e6" opacity="0.40"/><ellipse cx="25.7" cy="69.8" rx="0.9" ry="1.2" fill="#6ad4e6" opacity="0.37"/><ellipse cx="26.0" cy="60.0" rx="1.6" ry="0.9" fill="#6ad4e6" opacity="0.32"/><ellipse cx="34.6" cy="27.2" rx="1.7" ry="0.7" fill="#6ad4e6" opacity="0.43"/><ellipse cx="65.5" cy="2.2" rx="1.2" ry="1.1" fill="#6ad4e6" opacity="0.57"/><ellipse cx="3.0" cy="2.5" rx="0.9" ry="1.2" fill="#6ad4e6" opacity="0.39"/><ellipse cx="54.6" cy="65.6" rx="1.1" ry="0.8" fill="#6ad4e6" opacity="0.64"/><ellipse cx="45.0" cy="19.1" rx="1.5" ry="0.8" fill="#6ad4e6" opacity="0.40"/><ellipse cx="0.3" cy="55.2" rx="1.7" ry="1.0" fill="#6ad4e6" opacity="0.63"/><ellipse cx="1.8" cy="17.1" rx="1.3" ry="1.2" fill="#6ad4e6" opacity="0.63"/><ellipse cx="28.2" cy="18.3" rx="1.2" ry="0.9" fill="#6ad4e6" opacity="0.62"/><ellipse cx="13.4" cy="58.6" rx="1.5" ry="1.1" fill="#6ad4e6" opacity="0.57"/><ellipse cx="44.3" cy="23.9" rx="1.1" ry="0.8" fill="#6ad4e6" opacity="0.57"/><ellipse cx="5.8" cy="14.4" rx="1.6" ry="0.7" fill="#6ad4e6" opacity="0.32"/><ellipse cx="2.5" cy="40.3" rx="1.1" ry="1.2" fill="#6ad4e6" opacity="0.61"/><ellipse cx="72.1" cy="19.3" rx="0.9" ry="0.7" fill="#6ad4e6" opacity="0.47"/><ellipse cx="51.8" cy="32.6" rx="1.0" ry="0.9" fill="#6ad4e6" opacity="0.52"/><ellipse cx="49.2" cy="54.6" rx="1.6" ry="1.0" fill="#6ad4e6" opacity="0.34"/><ellipse cx="61.4" cy="21.4" rx="1.4" ry="0.8" fill="#6ad4e6" opacity="0.56"/><ellipse cx="14.5" cy="18.1" rx="1.0" ry="0.7" fill="#6ad4e6" opacity="0.61"/><ellipse cx="42.2" cy="23.8" rx="1.2" ry="1.2" fill="#6ad4e6" opacity="0.48"/><ellipse cx="16.9" cy="59.0" rx="1.5" ry="1.2" fill="#6ad4e6" opacity="0.34"/><ellipse cx="34.7" cy="59.8" rx="1.6" ry="1.1" fill="#6ad4e6" opacity="0.31"/><ellipse cx="21.4" cy="8.7" rx="1.0" ry="1.2" fill="#6ad4e6" opacity="0.50"/><ellipse cx="67.9" cy="27.2" rx="1.7" ry="0.9" fill="#6ad4e6" opacity="0.39"/><ellipse cx="56.8" cy="69.0" rx="0.9" ry="1.0" fill="#6ad4e6" opacity="0.52"/><ellipse cx="15.9" cy="26.9" rx="0.9" ry="0.7" fill="#6ad4e6" opacity="0.39"/><ellipse cx="43.8" cy="47.6" rx="1.0" ry="0.6" fill="#6ad4e6" opacity="0.41"/><ellipse cx="49.5" cy="13.5" rx="1.1" ry="0.7" fill="#6ad4e6" opacity="0.58"/><ellipse cx="40.0" cy="4.6" rx="0.9" ry="0.8" fill="#6ad4e6" opacity="0.49"/><ellipse cx="46.7" cy="6.7" rx="1.0" ry="1.0" fill="#6ad4e6" opacity="0.44"/><ellipse cx="20.7" cy="22.5" rx="1.8" ry="0.8" fill="#6ad4e6" opacity="0.50"/><ellipse cx="26.1" cy="30.4" rx="1.7" ry="1.2" fill="#6ad4e6" opacity="0.43"/><ellipse cx="14.4" cy="53.1" rx="1.0" ry="0.6" fill="#6ad4e6" opacity="0.62"/><ellipse cx="30.9" cy="59.9" rx="1.2" ry="1.1" fill="#6ad4e6" opacity="0.46"/><ellipse cx="11.9" cy="1.1" rx="1.4" ry="1.0" fill="#6ad4e6" opacity="0.62"/><ellipse cx="6.5" cy="45.4" rx="1.2" ry="0.9" fill="#6ad4e6" opacity="0.35"/><ellipse cx="20.7" cy="38.0" rx="1.7" ry="0.7" fill="#6ad4e6" opacity="0.47"/><ellipse cx="58.8" cy="70.6" rx="1.0" ry="0.7" fill="#6ad4e6" opacity="0.63"/><ellipse cx="71.2" cy="35.2" rx="0.9" ry="1.2" fill="#6ad4e6" opacity="0.44"/><ellipse cx="66.0" cy="45.3" rx="1.6" ry="0.7" fill="#6ad4e6" opacity="0.58"/><ellipse cx="16.2" cy="29.5" rx="1.6" ry="1.1" fill="#6ad4e6" opacity="0.36"/><ellipse cx="15.9" cy="29.2" rx="1.3" ry="0.8" fill="#6ad4e6" opacity="0.34"/><ellipse cx="18.0" cy="52.9" rx="1.7" ry="0.6" fill="#6ad4e6" opacity="0.50"/><ellipse cx="55.3" cy="2.8" rx="1.6" ry="0.7" fill="#6ad4e6" opacity="0.51"/><ellipse cx="40.2" cy="45.8" rx="1.1" ry="0.9" fill="#6ad4e6" opacity="0.50"/><ellipse cx="31.1" cy="48.1" rx="1.2" ry="0.9" fill="#6ad4e6" opacity="0.31"/><ellipse cx="45.2" cy="35.7" rx="1.0" ry="1.1" fill="#6ad4e6" opacity="0.57"/><ellipse cx="33.5" cy="13.1" rx="1.3" ry="0.7" fill="#6ad4e6" opacity="0.34"/><ellipse cx="31.4" cy="6.7" rx="1.2" ry="0.9" fill="#6ad4e6" opacity="0.31"/><ellipse cx="46.5" cy="6.0" rx="1.5" ry="1.1" fill="#6ad4e6" opacity="0.48"/><ellipse cx="4.0" cy="36.8" rx="1.2" ry="1.2" fill="#6ad4e6" opacity="0.35"/><ellipse cx="62.6" cy="72.7" rx="1.5" ry="1.1" fill="#6ad4e6" opacity="0.37"/><ellipse cx="71.7" cy="35.9" rx="1.8" ry="1.1" fill="#6ad4e6" opacity="0.36"/><ellipse cx="57.6" cy="67.9" rx="0.9" ry="0.8" fill="#6ad4e6" opacity="0.56"/><ellipse cx="11.6" cy="65.4" rx="1.1" ry="1.1" fill="#6ad4e6" opacity="0.35"/><ellipse cx="36.7" cy="67.2" rx="1.0" ry="0.8" fill="#6ad4e6" opacity="0.48"/><ellipse cx="23.3" cy="2.7" rx="1.0" ry="0.7" fill="#6ad4e6" opacity="0.63"/><ellipse cx="49.6" cy="65.4" rx="1.0" ry="1.1" fill="#6ad4e6" opacity="0.34"/><ellipse cx="38.7" cy="46.5" rx="1.2" ry="1.1" fill="#6ad4e6" opacity="0.49"/><ellipse cx="42.3" cy="64.4" rx="0.9" ry="1.2" fill="#6ad4e6" opacity="0.52"/><ellipse cx="28.8" cy="58.2" rx="1.1" ry="1.2" fill="#6ad4e6" opacity="0.50"/><ellipse cx="26.3" cy="55.8" rx="1.2" ry="0.7" fill="#6ad4e6" opacity="0.56"/><ellipse cx="3.5" cy="59.8" rx="1.1" ry="1.0" fill="#6ad4e6" opacity="0.64"/><ellipse cx="42.8" cy="48.4" rx="1.1" ry="0.6" fill="#6ad4e6" opacity="0.31"/><ellipse cx="10.9" cy="45.0" rx="1.2" ry="0.9" fill="#6ad4e6" opacity="0.61"/><ellipse cx="9.6" cy="16.6" rx="1.5" ry="0.6" fill="#6ad4e6" opacity="0.30"/><ellipse cx="25.9" cy="7.8" rx="1.2" ry="0.7" fill="#6ad4e6" opacity="0.50"/><ellipse cx="43.0" cy="14.9" rx="1.4" ry="0.9" fill="#6ad4e6" opacity="0.35"/><ellipse cx="68.4" cy="17.8" rx="0.9" ry="0.7" fill="#6ad4e6" opacity="0.52"/><ellipse cx="63.6" cy="57.1" rx="1.2" ry="0.8" fill="#6ad4e6" opacity="0.30"/><ellipse cx="47.1" cy="41.1" rx="1.2" ry="1.0" fill="#6ad4e6" opacity="0.46"/><ellipse cx="68.4" cy="53.5" rx="1.0" ry="1.1" fill="#6ad4e6" opacity="0.32"/><ellipse cx="38.8" cy="29.6" rx="1.0" ry="0.6" fill="#6ad4e6" opacity="0.57"/><ellipse cx="0.9" cy="40.2" rx="1.7" ry="0.7" fill="#6ad4e6" opacity="0.37"/><ellipse cx="44.4" cy="37.0" rx="1.4" ry="1.1" fill="#6ad4e6" opacity="0.36"/><ellipse cx="22.6" cy="21.9" rx="0.8" ry="1.1" fill="#6ad4e6" opacity="0.57"/><ellipse cx="52.2" cy="0.5" rx="1.6" ry="1.0" fill="#6ad4e6" opacity="0.46"/><ellipse cx="54.1" cy="33.0" rx="1.0" ry="0.7" fill="#6ad4e6" opacity="0.38"/><ellipse cx="2.8" cy="24.5" rx="1.5" ry="1.0" fill="#6ad4e6" opacity="0.60"/><ellipse cx="52.0" cy="19.4" rx="1.4" ry="0.9" fill="#6ad4e6" opacity="0.58"/><ellipse cx="38.2" cy="19.4" rx="1.4" ry="1.2" fill="#6ad4e6" opacity="0.38"/><ellipse cx="64.2" cy="1.1" rx="1.1" ry="0.7" fill="#6ad4e6" opacity="0.56"/><ellipse cx="69.0" cy="54.5" rx="1.1" ry="1.1" fill="#6ad4e6" opacity="0.41"/><ellipse cx="17.5" cy="66.3" rx="1.4" ry="1.0" fill="#6ad4e6" opacity="0.53"/><ellipse cx="71.5" cy="34.3" rx="1.6" ry="1.0" fill="#6ad4e6" opacity="0.60"/><ellipse cx="31.9" cy="52.9" rx="1.4" ry="0.8" fill="#6ad4e6" opacity="0.37"/><ellipse cx="45.5" cy="5.7" rx="1.7" ry="0.7" fill="#6ad4e6" opacity="0.31"/><ellipse cx="7.8" cy="67.8" rx="1.1" ry="0.7" fill="#6ad4e6" opacity="0.31"/><ellipse cx="3.0" cy="50.6" rx="1.4" ry="1.0" fill="#6ad4e6" opacity="0.56"/><ellipse cx="4.8" cy="43.1" rx="1.2" ry="1.1" fill="#6ad4e6" opacity="0.59"/><ellipse cx="65.1" cy="4.8" rx="1.7" ry="1.1" fill="#6ad4e6" opacity="0.63"/><ellipse cx="7.8" cy="15.0" rx="0.9" ry="0.6" fill="#6ad4e6" opacity="0.60"/><ellipse cx="59.3" cy="46.3" rx="1.6" ry="1.0" fill="#6ad4e6" opacity="0.40"/><ellipse cx="7.3" cy="7.1" rx="1.6" ry="0.7" fill="#6ad4e6" opacity="0.41"/><ellipse cx="30.9" cy="1.5" rx="1.1" ry="0.8" fill="#6ad4e6" opacity="0.55"/><ellipse cx="26.9" cy="23.4" rx="1.8" ry="0.9" fill="#6ad4e6" opacity="0.60"/><ellipse cx="45.1" cy="2.3" rx="1.2" ry="0.9" fill="#6ad4e6" opacity="0.57"/><ellipse cx="25.3" cy="51.4" rx="1.3" ry="0.7" fill="#6ad4e6" opacity="0.60"/><ellipse cx="6.6" cy="59.8" rx="1.0" ry="0.6" fill="#6ad4e6" opacity="0.37"/><ellipse cx="55.6" cy="71.4" rx="0.8" ry="0.9" fill="#6ad4e6" opacity="0.47"/><ellipse cx="58.2" cy="13.5" rx="1.3" ry="0.8" fill="#6ad4e6" opacity="0.59"/><ellipse cx="19.0" cy="68.9" rx="1.1" ry="0.7" fill="#6ad4e6" opacity="0.54"/><ellipse cx="36.4" cy="8.0" rx="1.4" ry="0.6" fill="#6ad4e6" opacity="0.58"/><ellipse cx="50.9" cy="57.4" rx="1.4" ry="0.8" fill="#6ad4e6" opacity="0.44"/><ellipse cx="28.8" cy="65.0" rx="0.9" ry="1.1" fill="#6ad4e6" opacity="0.31"/><ellipse cx="15.0" cy="19.2" rx="1.7" ry="0.9" fill="#6ad4e6" opacity="0.43"/><ellipse cx="64.5" cy="17.1" rx="1.3" ry="0.9" fill="#6ad4e6" opacity="0.56"/><ellipse cx="55.0" cy="47.2" rx="1.1" ry="0.8" fill="#6ad4e6" opacity="0.35"/><ellipse cx="61.5" cy="48.3" rx="1.5" ry="0.7" fill="#6ad4e6" opacity="0.45"/><ellipse cx="56.5" cy="42.3" rx="0.9" ry="0.9" fill="#6ad4e6" opacity="0.61"/><ellipse cx="17.4" cy="14.0" rx="1.1" ry="1.0" fill="#6ad4e6" opacity="0.60"/><ellipse cx="11.3" cy="11.4" rx="1.0" ry="0.8" fill="#6ad4e6" opacity="0.48"/><ellipse cx="11.7" cy="23.9" rx="1.0" ry="1.2" fill="#6ad4e6" opacity="0.56"/><ellipse cx="7.4" cy="70.3" rx="0.9" ry="0.8" fill="#6ad4e6" opacity="0.64"/><ellipse cx="58.0" cy="53.5" rx="1.2" ry="0.7" fill="#6ad4e6" opacity="0.52"/><ellipse cx="7.8" cy="15.1" rx="1.2" ry="0.6" fill="#6ad4e6" opacity="0.44"/><ellipse cx="57.7" cy="50.6" rx="1.3" ry="1.0" fill="#6ad4e6" opacity="0.46"/><ellipse cx="10.4" cy="44.1" rx="1.2" ry="1.0" fill="#6ad4e6" opacity="0.62"/><ellipse cx="31.4" cy="41.9" rx="1.5" ry="0.9" fill="#6ad4e6" opacity="0.38"/><ellipse cx="52.7" cy="64.2" rx="1.6" ry="1.0" fill="#6ad4e6" opacity="0.60"/><ellipse cx="49.6" cy="46.8" rx="1.3" ry="0.8" fill="#6ad4e6" opacity="0.52"/><ellipse cx="7.1" cy="30.6" rx="1.6" ry="1.0" fill="#6ad4e6" opacity="0.52"/><ellipse cx="18.3" cy="30.9" rx="1.3" ry="1.0" fill="#6ad4e6" opacity="0.44"/><ellipse cx="49.3" cy="67.9" rx="1.0" ry="1.0" fill="#6ad4e6" opacity="0.57"/><ellipse cx="28.4" cy="35.8" rx="1.8" ry="0.6" fill="#6ad4e6" opacity="0.49"/><ellipse cx="11.7" cy="57.1" rx="1.7" ry="0.9" fill="#6ad4e6" opacity="0.34"/><ellipse cx="41.9" cy="39.5" rx="1.5" ry="0.9" fill="#6ad4e6" opacity="0.52"/><ellipse cx="60.5" cy="38.1" rx="1.2" ry="1.2" fill="#6ad4e6" opacity="0.37"/><ellipse cx="50.0" cy="28.7" rx="1.6" ry="0.7" fill="#6ad4e6" opacity="0.64"/><ellipse cx="25.9" cy="4.1" rx="1.1" ry="0.8" fill="#6ad4e6" opacity="0.30"/><ellipse cx="30.6" cy="30.7" rx="1.5" ry="0.8" fill="#6ad4e6" opacity="0.39"/><ellipse cx="16.4" cy="54.1" rx="1.7" ry="0.9" fill="#6ad4e6" opacity="0.38"/><ellipse cx="58.5" cy="28.6" rx="1.0" ry="0.7" fill="#6ad4e6" opacity="0.57"/><ellipse cx="59.1" cy="46.3" rx="1.3" ry="0.9" fill="#6ad4e6" opacity="0.38"/><ellipse cx="70.4" cy="25.8" rx="1.4" ry="1.1" fill="#6ad4e6" opacity="0.59"/><ellipse cx="34.2" cy="21.5" rx="1.3" ry="0.7" fill="#6ad4e6" opacity="0.59"/><ellipse cx="25.9" cy="62.1" rx="1.1" ry="0.8" fill="#6ad4e6" opacity="0.39"/><ellipse cx="31.1" cy="13.6" rx="0.8" ry="1.0" fill="#6ad4e6" opacity="0.40"/><ellipse cx="17.9" cy="22.0" rx="1.3" ry="0.9" fill="#6ad4e6" opacity="0.52"/><ellipse cx="48.1" cy="26.5" rx="1.7" ry="1.1" fill="#6ad4e6" opacity="0.32"/><ellipse cx="60.4" cy="66.1" rx="1.6" ry="0.7" fill="#6ad4e6" opacity="0.59"/><ellipse cx="46.2" cy="1.1" rx="0.8" ry="1.2" fill="#6ad4e6" opacity="0.53"/><ellipse cx="18.3" cy="7.4" rx="0.9" ry="0.7" fill="#6ad4e6" opacity="0.57"/><ellipse cx="25.3" cy="11.1" rx="1.7" ry="1.1" fill="#6ad4e6" opacity="0.36"/><ellipse cx="65.1" cy="44.4" rx="1.6" ry="1.0" fill="#6ad4e6" opacity="0.61"/><ellipse cx="57.5" cy="61.2" rx="1.0" ry="1.0" fill="#6ad4e6" opacity="0.49"/><ellipse cx="54.2" cy="32.0" rx="1.7" ry="0.9" fill="#6ad4e6" opacity="0.39"/><ellipse cx="17.1" cy="10.2" rx="1.3" ry="0.6" fill="#6ad4e6" opacity="0.46"/><ellipse cx="10.5" cy="35.9" rx="1.3" ry="0.9" fill="#6ad4e6" opacity="0.60"/><ellipse cx="0.5" cy="61.4" rx="1.3" ry="0.9" fill="#6ad4e6" opacity="0.53"/><ellipse cx="61.4" cy="27.4" rx="1.2" ry="1.2" fill="#6ad4e6" opacity="0.33"/><ellipse cx="46.5" cy="46.4" rx="0.8" ry="1.0" fill="#6ad4e6" opacity="0.54"/><ellipse cx="68.0" cy="24.1" rx="1.8" ry="0.9" fill="#6ad4e6" opacity="0.47"/><ellipse cx="65.5" cy="2.5" rx="1.5" ry="1.0" fill="#6ad4e6" opacity="0.42"/><ellipse cx="62.9" cy="26.7" rx="1.3" ry="0.9" fill="#6ad4e6" opacity="0.57"/><ellipse cx="15.4" cy="31.8" rx="1.2" ry="0.9" fill="#6ad4e6" opacity="0.59"/><ellipse cx="21.4" cy="60.4" rx="1.2" ry="0.9" fill="#6ad4e6" opacity="0.40"/><ellipse cx="37.0" cy="71.2" rx="1.5" ry="1.1" fill="#6ad4e6" opacity="0.42"/><ellipse cx="23.1" cy="21.8" rx="1.4" ry="1.0" fill="#6ad4e6" opacity="0.57"/><ellipse cx="2.9" cy="52.8" rx="1.7" ry="0.9" fill="#6ad4e6" opacity="0.32"/><ellipse cx="21.9" cy="0.5" rx="1.0" ry="1.2" fill="#6ad4e6" opacity="0.51"/><ellipse cx="48.0" cy="57.6" rx="1.7" ry="1.0" fill="#6ad4e6" opacity="0.52"/><ellipse cx="45.8" cy="50.8" rx="1.4" ry="1.0" fill="#6ad4e6" opacity="0.37"/><ellipse cx="48.7" cy="33.4" rx="1.6" ry="0.7" fill="#6ad4e6" opacity="0.36"/><ellipse cx="2.7" cy="56.5" rx="1.7" ry="1.0" fill="#6ad4e6" opacity="0.43"/><ellipse cx="60.1" cy="57.4" rx="1.4" ry="0.8" fill="#6ad4e6" opacity="0.41"/><ellipse cx="30.8" cy="23.2" rx="1.2" ry="1.0" fill="#6ad4e6" opacity="0.63"/><ellipse cx="4.0" cy="41.4" rx="0.8" ry="0.7" fill="#6ad4e6" opacity="0.58"/><ellipse cx="42.0" cy="67.1" rx="1.2" ry="0.6" fill="#6ad4e6" opacity="0.44"/><ellipse cx="43.2" cy="68.5" rx="1.8" ry="0.9" fill="#6ad4e6" opacity="0.44"/><ellipse cx="7.4" cy="47.0" rx="1.0" ry="0.7" fill="#6ad4e6" opacity="0.31"/><ellipse cx="0.3" cy="49.9" rx="0.9" ry="1.2" fill="#6ad4e6" opacity="0.33"/><ellipse cx="63.5" cy="9.4" rx="0.8" ry="1.0" fill="#6ad4e6" opacity="0.38"/><ellipse cx="53.5" cy="13.7" rx="0.9" ry="1.1" fill="#6ad4e6" opacity="0.55"/><ellipse cx="62.5" cy="53.3" rx="0.9" ry="1.0" fill="#6ad4e6" opacity="0.55"/><ellipse cx="33.6" cy="68.1" rx="1.1" ry="1.2" fill="#6ad4e6" opacity="0.55"/><ellipse cx="0.8" cy="1.1" rx="1.5" ry="1.1" fill="#6ad4e6" opacity="0.33"/><ellipse cx="22.7" cy="53.2" rx="1.0" ry="1.1" fill="#6ad4e6" opacity="0.47"/><ellipse cx="4.4" cy="26.8" rx="1.4" ry="0.9" fill="#6ad4e6" opacity="0.54"/></svg></div>
  <div class="img" style="left:95.7px;top:376.5px;background:#68b2f4;overflow:hidden"></div>
  <div class="img" style="left:174px;top:376.5px;background:linear-gradient(180deg,#b6e2fd 0%,#88caf9 40%,#58aef3 80%,#44a2f0 100%);overflow:hidden"></div>
</div>
<!-- collapse tab -->
<svg style="left:315px;top:229px" width="14" height="64" viewBox="0 0 14 64"><path d="M0 0 C0 5 12 4 12 13 V51 C12 60 0 59 0 64 Z" fill="#293039"/><path d="M3.3 30 L1 32.5 L3.3 35" fill="none" stroke="#e4e5e7" stroke-width="1.3"/></svg>
<div id="toolbar">
  <div class="t tt" style="left:15px;top:14px">Arimo</div>
  <svg style="left:116px;top:16px" width="9" height="6" viewBox="0 0 9 6"><path d="M1 1 L4.5 4.5 L8 1" fill="none" stroke="#2d3034" stroke-width="1.5"/></svg>
  <div class="t tt" style="left:143px;top:14px;color:#4a4d52">64</div>
  <svg style="left:171px;top:16px" width="9" height="6" viewBox="0 0 9 6"><path d="M1 1 L4.5 4.5 L8 1" fill="none" stroke="#2d3034" stroke-width="1.5"/></svg>
  <svg style="left:200px;top:11px" width="10" height="11" viewBox="0 0 10 11"><path d="M0.8 10.6 L5 0.6 L9.2 10.6 M2.4 7 H7.6" fill="none" stroke="#1a1c1f" stroke-width="1.5"/></svg>
  <div class="abs" style="left:197px;top:22.8px;width:16px;height:4px;border-radius:2px;background:linear-gradient(90deg,#e8701a,#f0c020 30%,#48d048 55%,#20b0e0 78%,#2464d4)"></div>
  <div class="t" style="left:229.5px;top:13px;font-size:12.5px;font-weight:bold;color:#1d1f22">B</div>
  <svg style="left:258px;top:13px" width="10" height="11" viewBox="0 0 10 11"><path d="M4 0.8 H9.5 M0.5 10.2 H6 M6.8 0.8 L3.2 10.2" fill="none" stroke="#1d1f22" stroke-width="1.3"/></svg>
  <svg style="left:285px;top:13px" width="16" height="11" viewBox="0 0 16 11"><path d="M0.5 1 H15.5 M3 4 H13 M0.5 7 H15.5 M3 10 H13" fill="none" stroke="#2d3034" stroke-width="1.3"/></svg>
  <div class="t" style="left:314px;top:13px;font-size:12.5px;color:#2d3034">aA</div>
  <svg style="left:345px;top:13px" width="13" height="11" viewBox="0 0 13 11"><circle cx="1.5" cy="1.5" r="1.5" fill="#1d1f22"/><circle cx="1.5" cy="5.5" r="1.5" fill="#1d1f22"/><circle cx="1.5" cy="9.5" r="1.5" fill="#1d1f22"/><path d="M5 1.5 H12.5 M5 5.5 H12.5 M5 9.5 H12.5" stroke="#2d3034" stroke-width="1.3"/></svg>
  <div class="t tt" style="left:375px;top:14px;transform:scaleX(0.97)">Odstępy</div>
  <div class="t tt" style="left:435.5px;top:14px">Powiel</div>
  <div class="t tt" style="left:486px;top:14px;transform:scaleX(0.91)">Pozycja</div>
  <!-- paint roller -->
  <svg style="left:539px;top:11px" width="15" height="15" viewBox="0 0 15 15"><rect x="0.8" y="0.8" width="11.4" height="3.6" rx="1.4" fill="none" stroke="#26282c" stroke-width="1.4"/><path d="M12.2 2.6 H13.2 A0.8 0.8 0 0 1 14 3.4 V5.6 A1 1 0 0 1 13 6.6 H8.4 A1 1 0 0 0 7.4 7.6 V8.4" fill="none" stroke="#26282c" stroke-width="1.3"/><rect x="5.9" y="8.4" width="3" height="6.2" rx="1.5" fill="none" stroke="#26282c" stroke-width="1.3"/></svg>
  <!-- transparency -->
  <svg style="left:568px;top:11px" width="15" height="15" viewBox="0 0 15 15"><g fill="#111"><circle cx="1.5" cy="1.6" r="1.4"/><circle cx="1.5" cy="7.5" r="1.4"/><circle cx="1.5" cy="13.4" r="1.4"/></g><g fill="#3a3a3c"><circle cx="4.6" cy="4.5" r="1.3"/><circle cx="4.6" cy="10.5" r="1.3"/></g><g fill="#8c8d90"><circle cx="7.6" cy="1.6" r="1.3"/><circle cx="7.6" cy="7.5" r="1.3"/><circle cx="7.6" cy="13.4" r="1.3"/></g><g fill="#aeafb2"><circle cx="10.6" cy="4.5" r="1.3"/><circle cx="10.6" cy="10.5" r="1.3"/></g><g fill="#d2d3d5"><circle cx="13.5" cy="1.6" r="1.3"/><circle cx="13.5" cy="7.5" r="1.3"/><circle cx="13.5" cy="13.4" r="1.3"/></g></svg>
  <!-- link -->
  <svg style="left:597px;top:12px" width="16" height="13" viewBox="0 0 16 13"><path d="M7.6 2.2 H4.4 A2.9 2.9 0 0 0 4.4 8 H7.4 A2.9 2.9 0 0 0 10.1 6" fill="none" stroke="#26282c" stroke-width="1.4"/><path d="M8.4 10.6 H11.6 A2.9 2.9 0 0 0 11.6 4.8 H8.6 A2.9 2.9 0 0 0 5.9 6.8" fill="none" stroke="#26282c" stroke-width="1.4"/></svg>
  <!-- lock -->
  <svg style="left:628px;top:10px" width="13" height="16" viewBox="0 0 13 16"><path d="M3 6.5 V4.3 A3.3 3.3 0 0 1 9.6 4.3 V4.6" fill="none" stroke="#2a2d31" stroke-width="1.4"/><rect x="0.8" y="6.7" width="11.4" height="8.5" rx="1.3" fill="none" stroke="#2a2d31" stroke-width="1.4"/><path d="M6.5 9.5 V12.5" stroke="#2a2d31" stroke-width="1.5"/><circle cx="6.5" cy="9.6" r="1" fill="#2a2d31"/></svg>
  <!-- trash -->
  <svg style="left:657px;top:11px" width="13" height="15" viewBox="0 0 13 15"><path d="M0.5 3 H12.5 M4.3 3 V1.3 H8.7 V3" fill="none" stroke="#2a2d31" stroke-width="1.4"/><path d="M1.8 3 V13 A1.3 1.3 0 0 0 3.1 14.3 H9.9 A1.3 1.3 0 0 0 11.2 13 V3" fill="none" stroke="#2a2d31" stroke-width="1.4"/><path d="M5 5.8 V11.5 M8 5.8 V11.5" stroke="#2a2d31" stroke-width="1.3"/></svg>
</div>
<div class="t" style="left:449px;top:93px;font-size:11px;font-weight:bold;color:#9a9ca0;transform:scaleX(0.96)">Strona 2 -</div>
<div class="t" style="left:500px;top:93px;font-size:11px;color:#b9bbbe;transform:scaleX(1.04)">Dodaj stronę tytułową.</div>
<!-- page header icons -->
<svg style="left:706px;top:91px" width="14" height="14" viewBox="0 0 14 14"><path d="M1 2 A1 1 0 0 1 2 1 H12 A1 1 0 0 1 13 2 V8.5 L8.5 13 H2 A1 1 0 0 1 1 12 Z M13 8.5 H9.5 A1 1 0 0 0 8.5 9.5 V13" fill="none" stroke="#939599" stroke-width="1.3"/></svg>
<svg style="left:734px;top:95px" width="11" height="8" viewBox="0 0 11 8"><path d="M1 6.5 L5.5 2 L10 6.5" fill="none" stroke="#939599" stroke-width="1.3"/></svg>
<svg style="left:760px;top:95px" width="11" height="8" viewBox="0 0 11 8"><path d="M1 1.5 L5.5 6 L10 1.5" fill="none" stroke="#c4c6c9" stroke-width="1.3"/></svg>
<svg style="left:786px;top:91px" width="12" height="14" viewBox="0 0 12 14"><path d="M3.5 10 H1.8 A1 1 0 0 1 0.8 9 V1.8 A1 1 0 0 1 1.8 0.8 H7 A1 1 0 0 1 8 1.8 V3.5" fill="none" stroke="#939599" stroke-width="1.2"/><rect x="3.8" y="3.8" width="7.4" height="9.4" rx="1" fill="none" stroke="#939599" stroke-width="1.2"/></svg>
<svg style="left:813px;top:91px" width="11" height="14" viewBox="0 0 11 14"><path d="M0.5 3 H10.5 M3.5 3 V1.2 H7.5 V3" fill="none" stroke="#939599" stroke-width="1.2"/><path d="M1.6 3 V12.2 A1 1 0 0 0 2.6 13.2 H8.4 A1 1 0 0 0 9.4 12.2 V3" fill="none" stroke="#939599" stroke-width="1.2"/><path d="M4.2 5.5 V10.8 M6.8 5.5 V10.8" stroke="#939599" stroke-width="1.1"/></svg>
<svg style="left:839px;top:93px" width="11" height="11" viewBox="0 0 11 11"><path d="M5.5 0.5 V10.5 M0.5 5.5 H10.5" stroke="#939599" stroke-width="1.3"/></svg>
<div id="page">
  <div class="hl" style="top:94.8px"></div>
  <div class="hl" style="top:191px"></div>
  <div class="vl" style="left:134.6px;width:2.2px"></div>
  <div class="vl" style="left:270.8px"></div>
</div>
<!-- selection -->
<div class="abs" style="left:447.5px;top:336.5px;width:135.5px;height:16px;border:2px solid #3ec6d2;border-right:none"></div>
<div class="t" style="left:472px;top:337.5px;font-size:12.5px;color:#3a3c40;transform-origin:50% 50%;transform:rotate(180deg) scaleX(0.95)">TREŚĆ FISZKI</div>
<div class="abs" style="left:446px;top:339.5px;width:4px;height:11px;border-radius:2px;background:#fff;border:1px solid #c8c9cc"></div>
<div class="abs" style="left:577.5px;top:348px;width:9px;height:9px;border-radius:50%;background:#fff;box-shadow:0 0 1.5px 0.5px rgba(0,0,0,0.25)"></div>
<div class="abs" style="left:496px;top:304.3px;width:15px;height:15px;border-radius:50%;background:#fff;box-shadow:0 0 1.5px 0.5px rgba(0,0,0,0.18)"></div>
<svg style="left:498.5px;top:306.5px" width="10" height="10" viewBox="0 0 10 10"><path d="M5 2 V8 M2 5 H8" stroke="#1d1f22" stroke-width="1.1"/><path d="M5 0.2 L6.8 2.4 H3.2 Z M5 9.8 L6.8 7.6 H3.2 Z M0.2 5 L2.4 3.2 V6.8 Z M9.8 5 L7.6 3.2 V6.8 Z" fill="#1d1f22"/></svg>
<div class="abs" style="left:520px;top:304.3px;width:15px;height:15px;border-radius:50%;background:#fff;box-shadow:0 0 1.5px 0.5px rgba(0,0,0,0.18)"></div>
<svg style="left:522.5px;top:306.5px" width="10" height="10" viewBox="0 0 10 10"><path d="M3.2 2 A4 4 0 0 0 2.6 8.6 M6.8 8 A4 4 0 0 0 7.4 1.4" fill="none" stroke="#2d2f33" stroke-width="1.5"/><path d="M1.6 0.2 L5 1.6 L2.4 4 Z M8.4 9.8 L5 8.4 L7.6 6 Z" fill="#2d2f33"/></svg>
<!-- comment button -->
<div class="abs" style="left:861px;top:337.5px;width:23px;height:23px;border-radius:50%;background:#fff;box-shadow:0 1px 3px rgba(0,0,0,0.18)"></div>
<svg style="left:866px;top:343px" width="14" height="14" viewBox="0 0 14 14"><path d="M8.3 2.1 A5.2 5.2 0 1 0 11.6 7.9" fill="none" stroke="#6f7175" stroke-width="1.3"/><path d="M4.6 11.8 L5.6 14 L7.9 12.1" fill="#fff" stroke="#6f7175" stroke-width="1.2" stroke-linejoin="round"/><path d="M11.8 0.2 V4.6 M9.6 2.4 H14" stroke="#6f7175" stroke-width="1.2"/></svg>
<!-- add page -->
<div class="abs" style="left:449px;top:416px;width:406px;height:29px;border:1px solid #d6d7da;border-radius:3px;background:#edeef0"></div>
<div class="t" style="left:601px;top:426px;font-size:11px;color:#8a8c90">+ Dodaj nową stronę</div>
<!-- zoom controls -->
<div class="abs" style="left:816px;top:438px;width:94.5px;height:28px;border-radius:5px;background:#eff0f2;box-shadow:0 0 2px rgba(0,0,0,0.14)"></div>
<div class="t" style="left:826.5px;top:447px;font-size:11.5px;color:#2d3034;transform:scaleX(0.88)">19%</div>
<svg style="left:861px;top:446px" width="13" height="13" viewBox="0 0 13 13"><g fill="none" stroke="#26282c" stroke-width="1.3"><rect x="0.9" y="0.9" width="4.3" height="4.3" rx="0.9"/><rect x="7.8" y="0.9" width="4.3" height="4.3" rx="0.9"/><rect x="0.9" y="7.8" width="4.3" height="4.3" rx="0.9"/><rect x="7.8" y="7.8" width="4.3" height="4.3" rx="0.9"/></g></svg>
<svg style="left:887.5px;top:446px" width="13" height="13" viewBox="0 0 13 13"><path d="M7.5 5.5 L12 1 M8.2 1 H12 V4.8 M5.5 7.5 L1 12 M1 8.2 V12 H4.8" fill="none" stroke="#26282c" stroke-width="1.3"/></svg>
<!-- scrollbars -->
<div class="abs" style="left:985px;top:77px;width:15px;height:391px;background:#f0f0f1"></div>
<div class="abs" style="left:990px;top:257px;width:8px;height:199px;background:#c1c1c1"></div>
<svg style="left:991px;top:81px" width="6" height="4" viewBox="0 0 6 4"><path d="M0 3.5 L3 0.3 L6 3.5 Z" fill="#333"/></svg>
<svg style="left:992px;top:460px" width="5" height="3" viewBox="0 0 5 3"><path d="M0 0 L2.5 3 L5 0 Z" fill="#9a9a9a"/></svg>
<div class="abs" style="left:316px;top:471px;width:672px;height:10px;background:#f0f0f1"></div>
<div class="abs" style="left:988px;top:468px;width:12px;height:13px;background:#e6e6e7"></div>
<svg style="left:321px;top:473px" width="4" height="5" viewBox="0 0 4 5"><path d="M3.5 0 L0.5 2.5 L3.5 5 Z" fill="#8a8a8a"/></svg>
<svg style="left:980px;top:473px" width="4" height="5" viewBox="0 0 4 5"><path d="M0.5 0 L3.5 2.5 L0.5 5 Z" fill="#555"/></svg>
<!-- help -->
<div class="abs" style="left:917px;top:434px;width:72px;height:35px;border-radius:18px;background:#7d2ae8;box-shadow:0 0 0 1px rgba(255,255,255,0.85)"></div>
<div class="t" style="left:929.5px;top:447px;font-size:11px;font-weight:bold;color:#fff;transform:scaleX(0.87)">Pomoc</div>
<div class="t" style="left:967.5px;top:446px;font-size:12px;font-weight:bold;color:#fff">?</div>
</body></html>
